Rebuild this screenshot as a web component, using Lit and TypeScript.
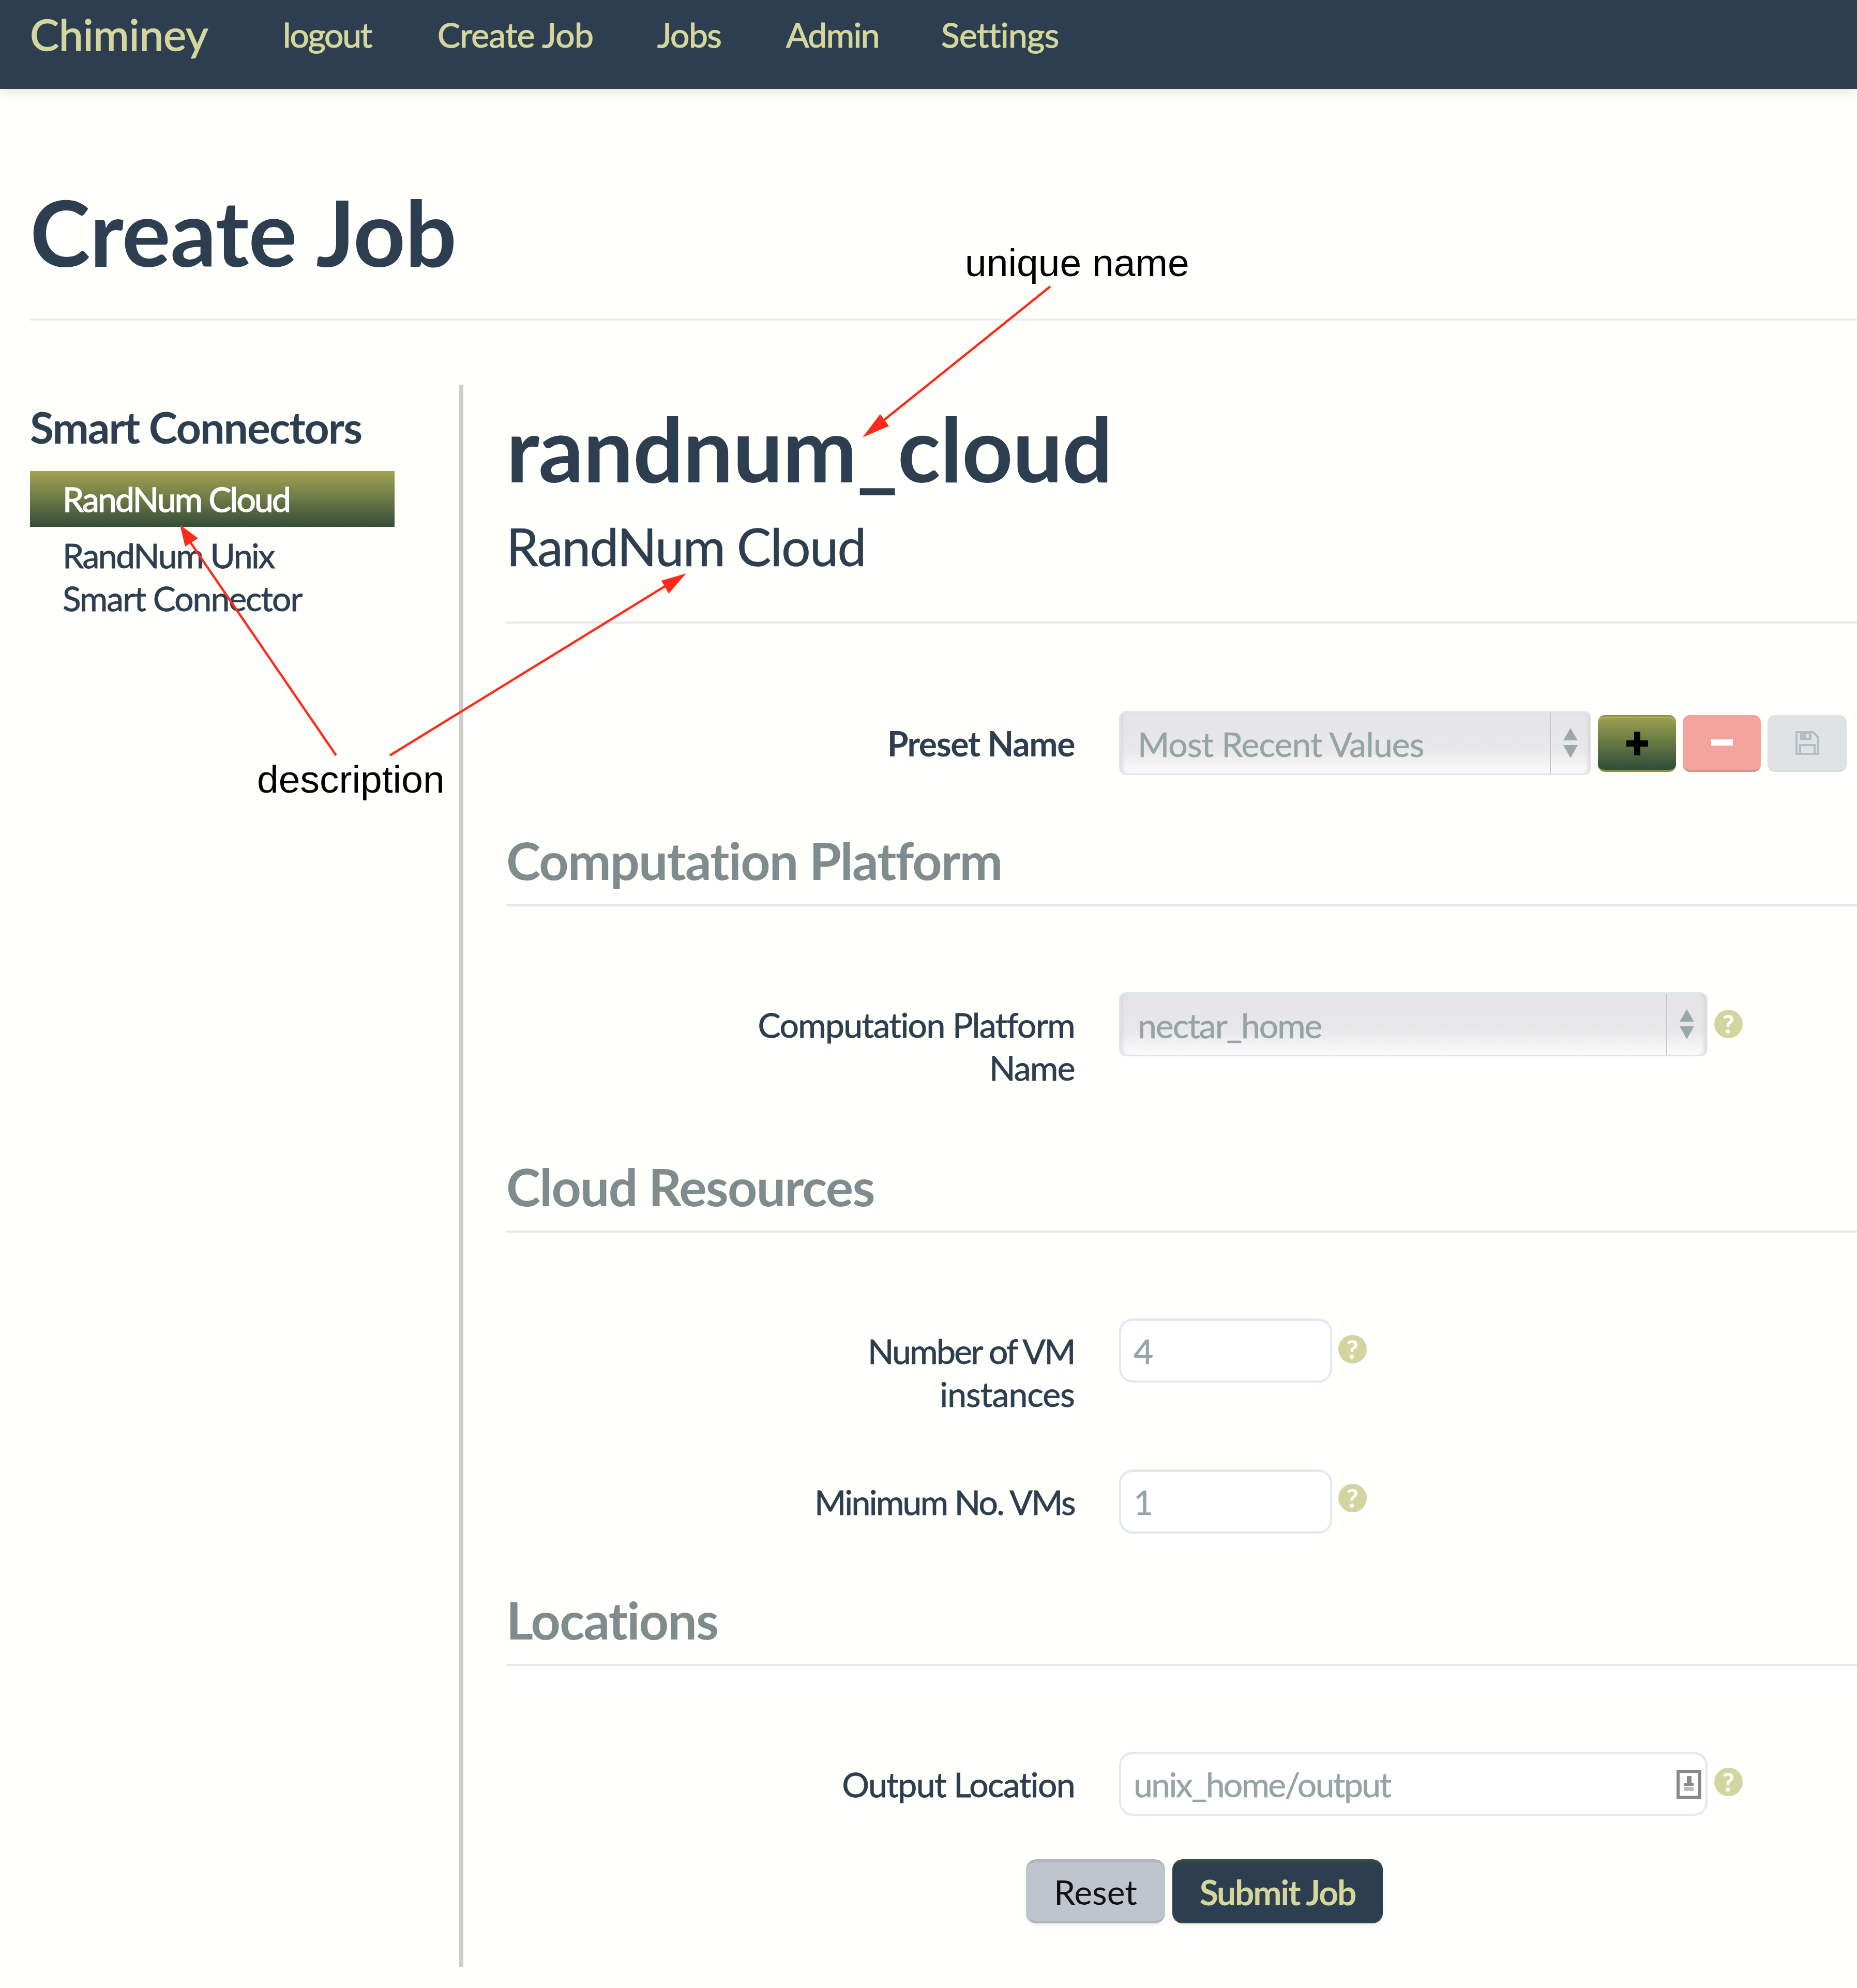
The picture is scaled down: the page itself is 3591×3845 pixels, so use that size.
import { LitElement, html, css, svg } from "lit";
import { customElement } from "lit/decorators.js";

const arrows = html`<svg class="updown" viewBox="0 0 30 58" aria-hidden="true"><path d="M15 0 L29 24 L1 24Z M1 33 L29 33 L15 58Z" fill="#9aa8aa"/></svg>`;

@customElement("app-root")
export class AppRoot extends LitElement {
  static styles = css`
    :host { display: block; position: relative; width: 3591px; height: 3845px; background: #fffffc; color: #2c3e50; font-family: Lato, "Open Sans", sans-serif; font-size: 66px; overflow: hidden; }
    .nav { height: 172px; background: #2c3e50; color: #d5d69c; display: flex; align-items: flex-start; padding-left: 58px; box-shadow: 0 6px 22px rgba(0,0,0,.10); box-sizing: border-box; }
    .brand { font-size: 84px; line-height: 132px; width: 489px; font-weight: 400; -webkit-text-stroke: 1.5px #d5d69c; letter-spacing: -.2px; }
    .nav a { line-height: 134px; font-size: 66px; font-weight: 400; -webkit-text-stroke: 1.2px #d5d69c; letter-spacing: -.7px; }
    .nav a.l1 { width: 299px; letter-spacing: -2.2px; }
    .l2 { width: 425px; }
    .nav a.l3 { width: 249px; letter-spacing: -1.6px; }
    .nav a.l4 { width: 300px; letter-spacing: -1.6px; }
    .head { margin-left: 58px; height: 444px; border-bottom: 4px solid #e9edf2; }
    h1 { margin: 0; padding-top: 176px; font-size: 176px; line-height: 200px; font-weight: 700; letter-spacing: -.7px; }
    .cols { display: flex; margin-top: 124px; height: 3060px; }
    aside { width: 830px; padding-left: 58px; }
    aside h4 { margin: 32px 0 0; font-size: 84px; line-height: 100px; font-weight: 700; letter-spacing: -1.9px; }
    .item { display: block; padding-left: 63px; width: 642px; line-height: 83px; letter-spacing: -2px; -webkit-text-stroke: .8px #2c3e50; }
    .item.u { letter-spacing: -2.4px; }
    .item.active { margin-top: 35px; height: 108px; line-height: 108px; background: linear-gradient(#a4a352, #344e3a); color: #fff; -webkit-text-stroke: 1.4px #fff; letter-spacing: -2.8px; margin-bottom: 13px; }
    main { flex: 1; border-left: 8px solid #ccc; padding-left: 83px; }
    h2 { margin: 0; padding-top: 23px; font-size: 172px; line-height: 200px; font-weight: 700; letter-spacing: -.8px; }
    h3 { margin: 29px 0 0; font-size: 100px; line-height: 120px; font-weight: 400; letter-spacing: -2px; -webkit-text-stroke: .6px #2c3e50; }
    .rule { border-bottom: 4px solid #e6e8ea; }
    .r1 { height: 86px; } .r2 { height: 26px; }
    .sec { color: #7f8c8d; font-size: 100px; line-height: 120px; font-weight: 700; letter-spacing: -1.8px; }
    .row { display: grid; grid-template-columns: 1099px auto; column-gap: 86px; align-items: start; }
    .label { text-align: right; line-height: 83px; padding-top: 21px; letter-spacing: -1.6px; -webkit-text-stroke: .8px #2c3e50; }
    .label.b { font-weight: 700; letter-spacing: -1.4px; -webkit-text-stroke: 0; }
    .tight { letter-spacing: -2.6px; }
    .loose { letter-spacing: -.9px; }
    .controls { display: flex; align-items: flex-start; }
    .select { position: relative; box-sizing: border-box; height: 124px; border-radius: 14px; border: 3px solid #dfe6ee; background: linear-gradient(#e4e4e6 0%, #e8e8ea 60%, #fbfbfc 100%); color: #95a5a6; padding-left: 33px; line-height: 122px; box-shadow: inset 8px 0 8px -6px #cfd2d5, inset -8px 0 8px -6px #cfd2d5; display: flex; justify-content: space-between; letter-spacing: -.9px; -webkit-text-stroke: .6px #95a5a6; }
    .select.w-plat { letter-spacing: -2px; }
    .sel-btn { width: 75px; border-left: 2px solid #c4c8cb; display: flex; align-items: center; justify-content: center; }
    .updown { width: 30px; height: 58px; }
    .input { box-sizing: border-box; height: 124px; border-radius: 26px; border: 4px solid #e2e9f1; border-top-width: 5px; background: #fff; color: #95a5a6; padding-left: 24px; line-height: 116px; display: flex; justify-content: space-between; align-items: center; letter-spacing: -2.6px; -webkit-text-stroke: .6px #95a5a6; }
    .w-sm { width: 412px; } .w-lg { width: 1138px; }
    .w-preset { width: 913px; } .w-plat { width: 1138px; }
    .help { display: inline-block; flex: none; width: 55px; height: 55px; border-radius: 50%; background: #d3d5a0; color: #fffffc; font-size: 50px; font-weight: 900; line-height: 55px; text-align: center; margin-left: 13px; }
    .help.near { margin-left: 12px; }
    .icobtn { box-sizing: border-box; width: 151px; height: 110px; border-radius: 14px; display: flex; align-items: center; justify-content: center; flex: none; margin: 8px 0 0 13px; }
    .plus { background: linear-gradient(#9da24f, #2d4d38); border-top: 3px solid #8d8f3f; border-bottom: 4px solid #8d8f3f; box-shadow: inset 0 3px 0 #aeb16c; }
    .minus { background: #f3a49d; border-bottom: 4px solid #d8938c; }
    .save { width: 153px; background: #dfe3e5; border-bottom: 3px solid #d9dcdd; }
    .buttons { display: flex; margin: 84px 0 0 1005px; gap: 14px; }
    .btn { box-sizing: border-box; height: 124px; border-radius: 20px; line-height: 124px; text-align: center; }
    .reset { width: 269px; background: #c0c5cd; border-top: 6px solid #b0b5bd; border-bottom: 5px solid #b0b5bd; color: #111; line-height: 113px; box-shadow: 0 5px 8px rgba(0,0,0,.06); }
    .submit { width: 407px; background: #2c3e50; border-top: 6px solid #344e3a; border-bottom: 3px solid #344e3a; color: #d5d69c; font-weight: 700; line-height: 115px; box-shadow: 0 5px 8px rgba(0,0,0,.06); letter-spacing: -2.2px; }
    .mt-a { margin-top: 169px; } .mt-b { margin-top: 104px; } .mt-c { margin-top: 166px; } .mt-d { margin-top: 128px; } .mt-e { margin-top: 105px; height: 124px; } .mt-f { margin-top: 106px; }
    .h1 { margin-top: 34px; } .h2 { margin-top: 32px; } .h3 { margin-top: 28px; } .h4 { margin-top: 31px; }
    .inico { margin-right: 8px; }
    .anno { position: absolute; inset: 0; width: 3591px; height: 3845px; pointer-events: none; }
    .note { position: absolute; font-family: "Liberation Sans", Arial, sans-serif; font-size: 75px; line-height: 90px; color: #000; white-space: nowrap; }
    .n1 { left: 1866px; top: 463px; }
    .n2 { left: 497px; top: 1462px; }
  `;

  render() {
    return html`
      <div class="nav">
        <span class="brand">Chiminey</span>
        <a class="l1">logout</a><a class="l2">Create Job</a><a class="l3">Jobs</a><a class="l4">Admin</a><a>Settings</a>
      </div>
      <div class="head"><h1>Create Job</h1></div>
      <div class="cols">
        <aside>
          <h4>Smart Connectors</h4>
          <a class="item active">RandNum Cloud</a>
          <a class="item u">RandNum Unix</a>
          <a class="item">Smart Connector</a>
        </aside>
        <main>
          <h2>randnum_cloud</h2>
          <h3>RandNum Cloud</h3>
          <div class="rule r1"></div>

          <div class="row mt-a">
            <div class="label b">Preset Name</div>
            <div class="controls">
              <div class="select w-preset">Most Recent Values<span class="sel-btn">${arrows}</span></div>
              <span class="icobtn plus"><svg width="42" height="46" viewBox="0 0 42 46"><path d="M21 0V46M0 23H42" stroke="#000" stroke-width="12" fill="none"/></svg></span>
              <span class="icobtn minus"><svg width="42" height="12" viewBox="0 0 42 12"><rect width="42" height="12" fill="#fff"/></svg></span>
              <span class="icobtn save"><svg width="46" height="46" viewBox="0 0 46 46"><path d="M2 2H34L44 12V44H2Z" fill="none" stroke="#b5bdc0" stroke-width="4"/><path d="M9 3H31V17H9Z" fill="#b5bdc0"/><path d="M21 5H26V13H21Z" fill="#dfe3e5"/><path d="M9 44V27H37V44" fill="none" stroke="#b5bdc0" stroke-width="4"/></svg></span>
            </div>
          </div>

          <div class="sec mt-b">Computation Platform</div>
          <div class="rule r2"></div>

          <div class="row mt-c">
            <div class="label">Computation Platform<br />Name</div>
            <div class="controls">
              <div class="select w-plat">nectar_home<span class="sel-btn">${arrows}</span></div>
              <span class="help h1">?</span>
            </div>
          </div>

          <div class="sec mt-d">Cloud Resources</div>
          <div class="rule r2"></div>

          <div class="row mt-c">
            <div class="label"><span class="tight">Number of VM</span><br /><span class="loose">instances</span></div>
            <div class="controls">
              <div class="input w-sm">4</div>
              <span class="help near h2">?</span>
            </div>
          </div>
          <div class="row mt-e">
            <div class="label"><span class="tight">Minimum No. VMs</span></div>
            <div class="controls">
              <div class="input w-sm">1</div>
              <span class="help near h3">?</span>
            </div>
          </div>

          <div class="sec mt-f">Locations</div>
          <div class="rule r2"></div>

          <div class="row mt-c">
            <div class="label">Output Location</div>
            <div class="controls">
              <div class="input w-lg">unix_home/output
                <svg class="inico" width="48" height="56" viewBox="0 0 48 56"><rect x="3" y="3" width="42" height="50" fill="#fff" stroke="#8a8a8a" stroke-width="6"/><rect x="20" y="12" width="9" height="14" fill="#8a8a8a"/><rect x="15" y="26" width="18" height="5" fill="#8a8a8a"/><rect x="15" y="33" width="18" height="8" fill="#bbb"/></svg>
              </div>
              <span class="help h4">?</span>
            </div>
          </div>

          <div class="buttons">
            <div class="btn reset">Reset</div>
            <div class="btn submit">Submit Job</div>
          </div>
        </main>
      </div>

      <svg class="anno" viewBox="0 0 3591 3845" aria-hidden="true">
        ${svg`
          <g stroke="#ff2a1a" stroke-width="4.5" fill="none">
            <path d="M2031 554L1695 824"/><path d="M650 1461L362 1040"/><path d="M754 1461L1302 1124"/>
          </g>
          <g fill="#ff2a1a">
            <path d="M1668 846L1702 801L1719 824Z"/>
            <path d="M348 1015L383 1041L358 1057Z"/>
            <path d="M1327 1109L1293 1148L1279 1123Z"/>
          </g>`}
      </svg>
      <div class="note n1">unique name</div>
      <div class="note n2">description</div>
    `;
  }
}
